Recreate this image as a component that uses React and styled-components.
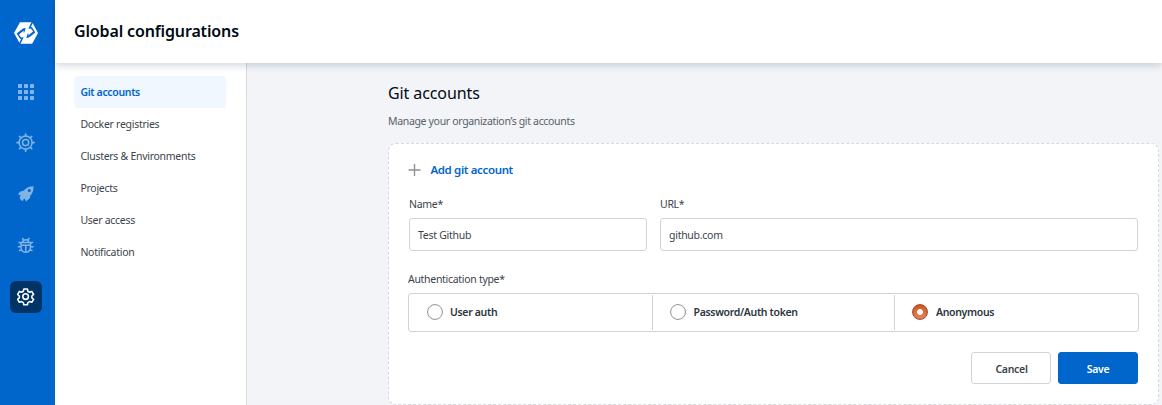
import React from 'react';
import styled, { createGlobalStyle, css } from 'styled-components';

const Global = createGlobalStyle`
  * { box-sizing: border-box; }
  body { margin: 0; overflow: hidden; font-family: "Noto Sans", "Open Sans", sans-serif; color: #3b444c; background: #f2f4f7; }
  button, input { font-family: inherit; }
`;

const Page = styled.div`
  display: flex;
  height: 405px;
  overflow: hidden;
`;

const Rail = styled.nav`
  width: 55px;
  flex: none;
  background: #0066cc;
  display: flex;
  flex-direction: column;
  align-items: center;
  padding: 17px 3px 0 0;
`;

const LogoSlot = styled.div`
  width: 32px;
  height: 32px;
  margin-bottom: 27px;
`;

const RailItem = styled.a`
  width: 32px;
  height: 32px;
  margin-top: ${(p) => (p.$active ? '1px' : '0')};
  margin-bottom: 19px;
  border-radius: 6px;
  display: flex;
  align-items: center;
  justify-content: center;
  color: ${(p) => (p.$active ? '#fff' : '#80b3e6')};
  background: ${(p) => (p.$active ? '#003366' : 'transparent')};
`;

const Main = styled.div`
  flex: 1;
  display: flex;
  flex-direction: column;
`;

const Header = styled.header`
  height: 63px;
  flex: none;
  background: #fff;
  box-shadow: 0 2px 8px rgba(0, 40, 80, 0.2);
  padding: 0 19px;
  position: relative;
  z-index: 1;
`;

const PageTitle = styled.h1`
  margin: 0;
  font-size: 16px;
  line-height: 62px;
  font-weight: 600;
  letter-spacing: -0.14px;
  color: #000a14;
`;

const Body = styled.div`
  flex: 1;
  display: flex;
  min-height: 0;
`;

const SideNav = styled.aside`
  width: 192px;
  flex: none;
  background: #fff;
  border-right: 1px solid #d6dbdf;
  padding: 13px 20px 0 19px;
`;

const NavLink = styled.a`
  display: block;
  height: 32px;
  line-height: 32px;
  padding-left: 6.4px;
  font-size: 10.5px;
  letter-spacing: -0.28px;
  border-radius: 3px;
  ${(p) => p.$active && css`
    background: #f0f7ff;
    color: #0066cc;
    font-weight: 600;
    letter-spacing: -0.34px;
  `}
`;

const Content = styled.main`
  flex: 1;
  background: #f2f4f7;
  padding: 18px 3px 0 141px;
`;

const SectionTitle = styled.h2`
  margin: 0;
  font-size: 16px;
  line-height: 24px;
  font-weight: 400;
  letter-spacing: -0.1px;
  color: #000a14;
`;

const SectionNote = styled.p`
  margin: 6px 0 12px;
  font-size: 10.5px;
  letter-spacing: -0.33px;
  line-height: 20px;
  color: #596168;
`;

const Card = styled.form`
  width: 771px;
  height: 262px;
  background: #fff;
  border: 1px dashed #d6d9dd;
  border-radius: 8px;
  padding: 16px 19px 0 19px;
`;

const AddRow = styled.div`
  display: flex;
  align-items: center;
  height: 20px;
  gap: 9.4px;
  color: #0066cc;
  font-size: 11.5px;
  letter-spacing: -0.36px;
  line-height: 18px;
  font-weight: 600;
  svg { color: #8c9196; }
`;

const Fields = styled.div`
  display: flex;
  gap: 13px;
  padding-left: 1px;
  margin-top: 15px;
`;

const Field = styled.label`
  width: ${(p) => p.$width};
  flex: none;
  font-size: 10.5px;
  letter-spacing: -0.3px;
  line-height: 18px;
`;

const Input = styled.input`
  display: block;
  width: 100%;
  height: 33px;
  margin-top: 5px;
  padding: 0 8px;
  border: 1px solid #d0d4d9;
  border-radius: 3px;
  background: #fff;
  color: #3b444c;
  font-size: 10.5px;
  letter-spacing: -0.27px;
`;

const AuthLabel = styled.div`
  margin-top: 19px;
  font-size: 10.5px;
  letter-spacing: -0.3px;
  line-height: 18px;
`;

const AuthGroup = styled.div`
  display: flex;
  align-items: center;
  height: 39px;
  margin-top: 5px;
  border: 1px solid #d0d4d9;
  border-radius: 3px;
`;

const AuthOption = styled.label`
  width: ${(p) => p.$width};
  height: 35px;
  display: flex;
  align-items: center;
  gap: ${(p) => p.$gap || '7px'};
  padding: 0 0 2px ${(p) => p.$inset || '17px'};
  font-size: 10.5px;
  letter-spacing: -0.33px;
  font-weight: 600;
  color: #2c3640;
  & + & { border-left: 1px solid #d0d4d9; }
`;

const Radio = styled.span`
  width: 16px;
  height: 16px;
  border-radius: 50%;
  border: 1px solid #9b9b9b;
  background: #fff;
  box-shadow: inset 0 0 1px rgba(0, 0, 0, 0.25);
  ${(p) => p.$checked && css`
    border-color: #a4502d;
    background: radial-gradient(circle, #fff 0 2.6px, transparent 3.3px), linear-gradient(#d5541f, #e48561);
  `}
`;

const Actions = styled.div`
  display: flex;
  justify-content: flex-end;
  gap: 7px;
  margin-top: 20px;
  padding-right: 1px;
`;

const Button = styled.button`
  width: 80px;
  height: 32px;
  padding: ${(p) => (p.$primary ? '2px 0 0' : '2px 0 0 1px')};
  border: 1px solid ${(p) => (p.$primary ? '#0066cc' : '#d0d4d9')};
  border-radius: 3px;
  background: ${(p) => (p.$primary ? '#0066cc' : '#fff')};
  color: ${(p) => (p.$primary ? '#fff' : '#3b444c')};
  font-size: 10.5px;
  letter-spacing: -0.3px;
  font-weight: 600;
`;

const Logo = () => (
  <svg width="32" height="32" viewBox="0 0 32 32">
    <path d="M10 5.200h12.200L28 16l-5.800 10.800H10L4 16z" fill="#fff" />
    <g fill="#0066cc">
      <path d="M21.800 4.500h1.800L20.800 10l1.200.2 3.300 5.200-6.300 5.200-2.700.5 1.400-4.700.9.300-.4 1.900 4.900-4.100-2.200-3-2.600.3z" />
      <path d="M10.200 27.500H8.400L11.200 22l-1.200-.2-3.300-5.200 6.300-5.200 2.700-.5-1.400 4.700-.9-.3.400-1.900-4.900 4.100 2.200 3 2.600-.3z" />
    </g>
  </svg>
);

const GridIcon = () => (
  <svg width="16" height="16" viewBox="0 0 16 16" fill="currentColor">
    {[0, 6, 12].map((y) => [0, 6, 12].map((x) => <rect key={`${x}-${y}`} x={x} y={y} width="4" height="4" rx=".5" />))}
  </svg>
);

const HelmIcon = () => (
  <svg width="20" height="20" viewBox="0 0 20 20" fill="none" stroke="currentColor" strokeLinecap="round">
    <circle cx="9.600" cy="9.600" r="6.500" strokeWidth="1.500" />
    <circle cx="9.600" cy="9.600" r="3.100" strokeWidth="1.500" />
    {[0, 45, 90, 135, 180, 225, 270, 315].map((a) => (
      <path key={a} d="M9.600 3V1" strokeWidth="1.700" transform={`rotate(${a} 9.600 9.600)`} />
    ))}
  </svg>
);

const RocketIcon = () => (
  <svg width="18" height="18" viewBox="0 0 18 18">
    <path fill="currentColor" fillRule="evenodd" d="M16.500 1.300c.2 4-.7 7-3.200 9.400-.2 2.200-1 3.600-3.300 4.800l-.9 1.200-1.300-3-1.200.3-.6 1.900C3.800 15.500 3.200 14.500 3.300 13.200L2.500 12l1.400-1.700-2.900-.8c1.300-2.600 3-3.700 5.700-3.700C9.100 2.600 12.600 1.300 16.500 1.300zM12.300 4.100a1.500 1.500 0 1 0 0 3 1.500 1.500 0 0 0 0-3z" />
  </svg>
);

const BugIcon = () => (
  <svg width="18" height="18" viewBox="0 0 18 18" fill="none" stroke="currentColor" strokeWidth="1.500">
    <path d="M4 6.500h9.500v5a4.750 4.800 0 0 1-9.500 0zM8.750 9V16.300M4 9.200h9.500M5.700 6c.2-3 5.900-3 6.100 0M6.500 3.800 5.200 2M11 3.800 12.300 2M4 7.300 1.500 6.100M13.500 7.300 16 6.100M4 10.700H.8M13.500 10.700h3.200M4.600 13.600 2 14.800M12.900 13.600l2.600 1.200" />
  </svg>
);

const GearIcon = () => (
  <svg width="18" height="18" viewBox="0 0 18 18" fill="none" stroke="currentColor" strokeWidth="1.600" strokeLinejoin="round">
    <g transform="translate(-.4 -.4)">
      <circle cx="9" cy="9" r="2.800" />
      <path d="M7.200 1.400h3.600l.5 2.200 1.700 1 2.200-.8 1.800 3.100-1.700 1.500v1.800l1.700 1.500-1.800 3-2.200-.7-1.700 1-.5 2.200H7.200L6.700 15 5 14l-2.200.7-1.800-3 1.700-1.500V8.400L1 6.900l1.800-3.100 2.200.8 1.700-1z" />
    </g>
  </svg>
);

const PlusIcon = () => (
  <svg width="13" height="12" viewBox="0 0 13 12" stroke="currentColor" strokeWidth="1.400">
    <path d="M6.500 0v12M.5 6h12" />
  </svg>
);

const railIcons = [GridIcon, HelmIcon, RocketIcon, BugIcon, GearIcon];
const links = ['Git accounts', 'Docker registries', 'Clusters & Environments', 'Projects', 'User access', 'Notification'];

export default function App() {
  return (
    <>
      <Global />
      <Page>
        <Rail>
          <LogoSlot><Logo /></LogoSlot>
          {railIcons.map((Icon, i) => (
            <RailItem key={i} $active={i === 4}><Icon /></RailItem>
          ))}
        </Rail>
        <Main>
          <Header><PageTitle>Global configurations</PageTitle></Header>
          <Body>
            <SideNav>
              {links.map((text, i) => <NavLink key={text} $active={i === 0}>{text}</NavLink>)}
            </SideNav>
            <Content>
              <SectionTitle>Git accounts</SectionTitle>
              <SectionNote>Manage your organization’s git accounts</SectionNote>
              <Card>
                <AddRow><PlusIcon /><span>Add git account</span></AddRow>
                <Fields>
                  <Field $width="238px">Name*<Input defaultValue="Test Github" /></Field>
                  <Field $width="478px">URL*<Input defaultValue="github.com" /></Field>
                </Fields>
                <AuthLabel>Authentication type*</AuthLabel>
                <AuthGroup>
                  <AuthOption $width="243px" $inset="18px"><Radio />User auth</AuthOption>
                  <AuthOption $width="242px" $gap="7.5px"><Radio />Password/Auth token</AuthOption>
                  <AuthOption $width="244px" $gap="8px"><Radio $checked />Anonymous</AuthOption>
                </AuthGroup>
                <Actions>
                  <Button type="button">Cancel</Button>
                  <Button type="button" $primary>Save</Button>
                </Actions>
              </Card>
            </Content>
          </Body>
        </Main>
      </Page>
    </>
  );
}
